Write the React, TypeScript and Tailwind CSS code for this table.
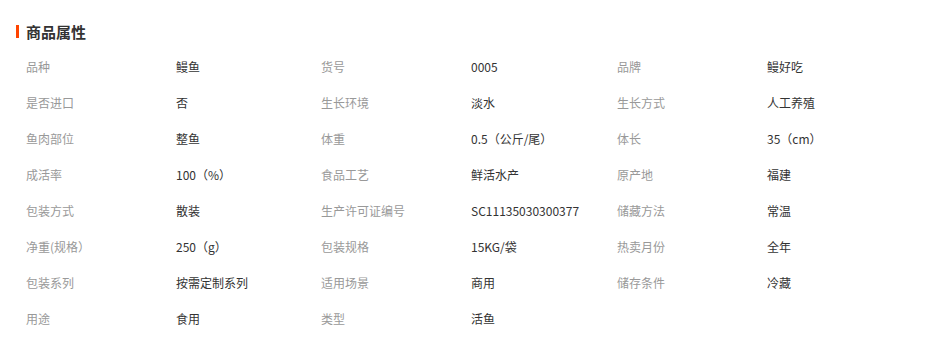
import React from 'react'

const rows: [string, string][][] = [
  [['品种', '鳗鱼'], ['货号', '0005'], ['品牌', '鳗好吃']],
  [['是否进口', '否'], ['生长环境', '淡水'], ['生长方式', '人工养殖']],
  [['鱼肉部位', '整鱼'], ['体重', '0.5（公斤/尾）'], ['体长', '35（cm）']],
  [['成活率', '100（%）'], ['食品工艺', '鲜活水产'], ['原产地', '福建']],
  [['包装方式', '散装'], ['生产许可证编号', 'SC11135030300377'], ['储藏方法', '常温']],
  [['净重(规格）', '250（g）'], ['包装规格', '15KG/袋'], ['热卖月份', '全年']],
  [['包装系列', '按需定制系列'], ['适用场景', '商用'], ['储存条件', '冷藏']],
  [['用途', '食用'], ['类型', '活鱼']],
]

export default function App() {
  return (
    <div className="w-[928px] h-[342px] bg-white pt-[23px] font-['Noto_Sans_CJK_SC',sans-serif]">
      <div className="flex items-center h-[16px] pl-[16px]">
        <span className="w-[3px] h-[13px] bg-[#ff4400]" />
        <h2 className="ml-[7px] text-[15px] font-bold text-[#333] leading-none">商品属性</h2>
      </div>
      <div className="mt-[10px] pl-[26px]">
        {rows.map((row, i) => (
          <div key={i} className="grid grid-cols-[150px_145px_150px_146px_150px_146px] h-[36px] items-center text-[12px]">
            {row.map(([k, v], j) => (
              <React.Fragment key={j}>
                <span className="text-[#999]">{k}</span>
                <span className="text-[#333]">{v}</span>
              </React.Fragment>
            ))}
          </div>
        ))}
      </div>
    </div>
  )
}
